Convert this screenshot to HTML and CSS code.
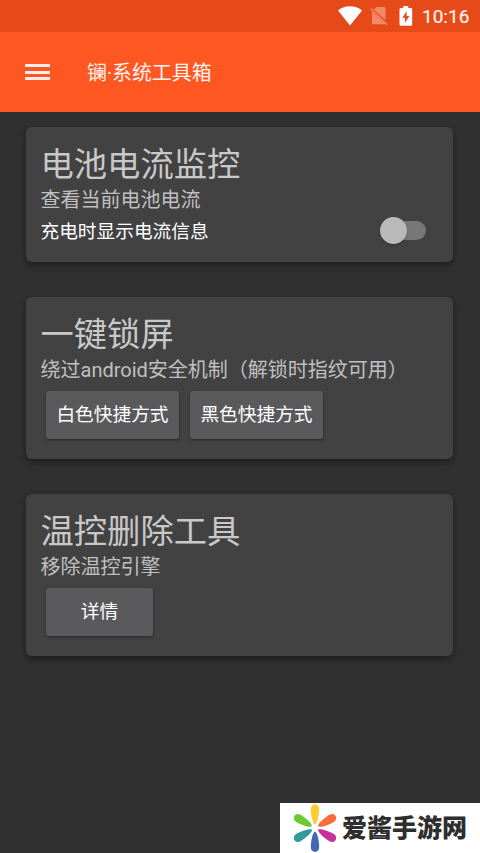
FILE: index.html
```html
<!DOCTYPE html>
<html lang="zh-CN">
<head>
<meta charset="utf-8">
<title>镧·系统工具箱</title>
<link rel="stylesheet" href="styles.css">
</head>
<body>
<div class="status">
  <svg class="wifi" width="24" height="20" viewBox="0 0 24 20"><path fill="#fff" d="M0 4.5C3.5 1.7 7.6.3 12 .3s8.500 1.400 12 4.200L12 19.400z"/></svg>
  <svg class="sim" width="18" height="20" viewBox="0 0 18 20"><path fill="#f18a68" d="M6.500 1H14q1.500 0 1.500 1.500V14.200L3.800 3.600zM2 5.400 15 17.800q-.400.500-1 .500H3.500Q2 18.300 2 16.800z"/><path stroke="#f18a68" stroke-width="1.500" d="M.6 2.500 17 18.800"/></svg>
  <svg class="battery" width="14" height="20" viewBox="0 0 14 20"><path fill="#fff" fill-rule="evenodd" d="M4.300 0h5v2H12q1.200 0 1.200 1.200v15.400q0 1.200-1.200 1.200H1.700Q.5 19.800.5 18.600V3.200Q.5 2 1.700 2h2.600zM7.600 5.300 3.300 11.800H6v4.900l4.300-6.700H7.600z"/></svg>
  <span>10:16</span>
</div>
<header class="bar">
  <div class="menu"><i></i><i></i><i></i></div>
  <h1>镧·系统工具箱</h1>
</header>
<main>
  <section class="card">
    <h2>电池电流监控</h2>
    <p>查看当前电池电流</p>
    <div class="setting"><span>充电时显示电流信息</span><div class="switch"><b></b></div></div>
  </section>
  <section class="card tall">
    <h2>一键锁屏</h2>
    <p>绕过android安全机制（解锁时指纹可用）</p>
    <div class="actions"><button>白色快捷方式</button><button>黑色快捷方式</button></div>
  </section>
  <section class="card tall">
    <h2>温控删除工具</h2>
    <p>移除温控引擎</p>
    <div class="actions"><button class="small">详情</button></div>
  </section>
</main>
<div class="brand">
  <svg width="44" height="50" viewBox="-22 -25 44 50">
    <defs><path id="petal" d="M0-3.500C-2.500-4.500-4.200-14-4.200-19C-4.200-25.500 4.200-25.500 4.200-19C4.200-14 2.500-4.500 0-3.500z"/></defs>
    <use href="#petal" fill="#fbcb36"/>
    <use href="#petal" fill="#fb6b3b" transform="rotate(60)"/>
    <use href="#petal" fill="#c9309b" transform="rotate(120)"/>
    <use href="#petal" fill="#4268b5" transform="rotate(180)"/>
    <use href="#petal" fill="#329b97" transform="rotate(240)"/>
    <use href="#petal" fill="#6bcb31" transform="rotate(300)"/>
  </svg>
  <span>爱酱手游网</span>
</div>
</body>
</html>
```
FILE: styles.css
```css
* { box-sizing: border-box; }
body {
  margin: 0;
  width: 480px;
  height: 853px;
  overflow: hidden;
  position: relative;
  background: #303030;
  color: #fff;
  font-family: Roboto, "Noto Sans CJK SC", sans-serif;
}
h1, h2, p { margin: 0; font-weight: 400; }
.status {
  height: 32px;
  background: #e64a19;
  display: flex;
  align-items: center;
  padding-left: 338px;
}
.sim { margin-left: 8px; }
.battery { margin-left: 11px; }
.status span { margin-left: 9px; padding-top: 1px; font-size: 19px; font-weight: 400; line-height: 31px; color: #fff1ec; -webkit-text-stroke: .2px #fff1ec; }
.bar {
  height: 80px;
  background: #ff5722;
  display: flex;
  align-items: center;
  padding-left: 25px;
}
.menu { width: 25px; height: 16px; display: flex; flex-direction: column; justify-content: space-between; }
.menu i { height: 3px; background: #ffeee9; }
.bar h1 { margin-left: 37px; padding-top: 3px; font-size: 19.9px; line-height: 30px; color: #fff4f0; }
main { padding: 15px 27px 0 26px; display: flex; flex-direction: column; gap: 35px; }
.card {
  height: 135px;
  padding: 15px 14px 0 14.5px;
  border-radius: 6px;
  background: #424242;
  box-shadow: 0 3px 7px rgba(0, 0, 0, .4);
}
.tall { height: 162px; }
.card h2 { font-size: 33.3px; line-height: 45px; color: #c9c9c9; }
.card p { font-size: 20px; line-height: 27px; color: #c0c0c0; white-space: nowrap; }
.setting { display: flex; align-items: center; justify-content: space-between; height: 33px; font-size: 18.7px; }
.setting span { padding-bottom: 3px; }
.switch { width: 46px; height: 27px; margin-right: 13px; display: flex; align-items: center; position: relative; }
.switch::before { content: ""; width: 38px; height: 19px; margin-left: 8px; border-radius: 10px; background: #777; }
.switch b { position: absolute; left: 0; top: 0; width: 27px; height: 27px; border-radius: 50%; background: #b9b9b9; box-shadow: 0 1px 2px rgba(0, 0, 0, .3); }
.actions { display: flex; gap: 11px; padding: 6.500px 0 0 5.500px; }
button {
  width: 133px;
  height: 48px;
  padding: 0 0 5px;
  border: 0;
  border-radius: 3px;
  background: #5a5a5c;
  box-shadow: 0 1px 3px rgba(0, 0, 0, .4);
  color: #fff;
  font: 400 18.7px Roboto, "Noto Sans CJK SC", sans-serif;
}
.small { width: 107px; }
.brand {
  position: absolute;
  right: 0;
  bottom: 0;
  width: 200px;
  height: 50px;
  background: #fff;
  display: flex;
  align-items: center;
  padding-left: 13px;
}
.brand span { margin-left: 5px; padding-bottom: 3px; font: 900 25px/47px "Noto Sans CJK SC", sans-serif; color: #2e2e2e; white-space: nowrap; }
```
